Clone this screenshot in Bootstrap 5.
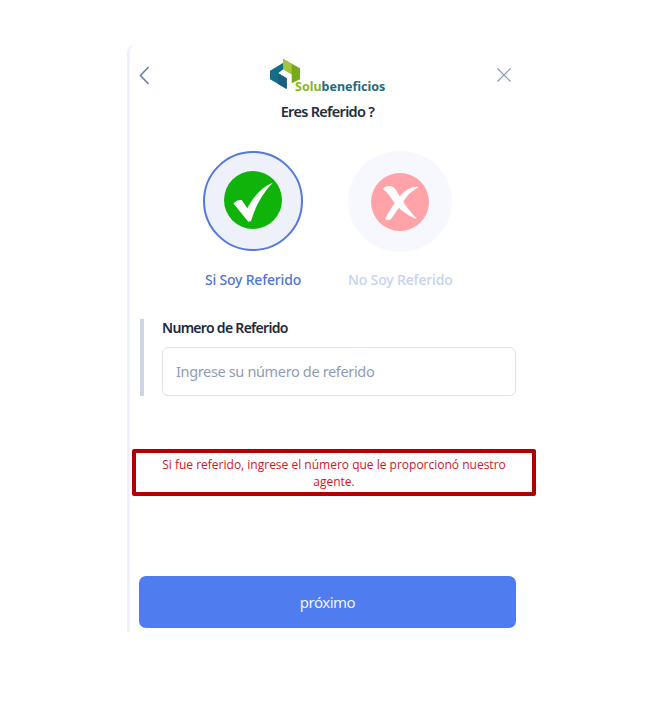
<!DOCTYPE html>
<html lang="es">

<head>
    <meta charset="UTF-8">
    <meta name="viewport" content="width=device-width, initial-scale=1">
    <title>Eres Referido</title>
    <link href="https://cdn.jsdelivr.net/npm/bootstrap@5.3.0/dist/css/bootstrap.min.css" rel="stylesheet">
    <style>
      body {
        background-color: #fff;
        font-family: "Noto Sans", "Open Sans", sans-serif;
      }
      .ref-panel {
        width: 392px;
        height: 587px;
        margin: 45px 0 0 127px;
        padding: 13px 0 0 9px;
        border-left: 3px solid #eef1fb;
        border-top-left-radius: 8px;
      }
      .ref-head {
        width: 377px;
        height: 36px;
      }
      .ref-back {
        margin: 8px 0 0 0;
      }
      .ref-logo {
        margin-left: 11px;
      }
      .ref-close {
        margin: 10px 5px 0 0;
      }
      .logo-text {
        font-family: "Noto Sans", sans-serif;
        font-size: 12.5px;
        font-weight: 700;
      }
      .ref-title {
        width: 377px;
        margin: 7px 0 0;
        font-size: 14.5px;
        font-weight: 600;
        line-height: 20px;
        color: #232b3e;
        text-align: center;
        letter-spacing: -0.7px;
      }
      .ref-options {
        margin: 30px 0 0 64px;
        gap: 45px;
      }
      .ref-option {
        width: 100px;
      }
      .ref-option.off {
        width: 104px;
      }
      .ref-circle {
        width: 100px;
        height: 100px;
        background-color: #eef1fa;
        border: 2px solid #5579dc;
      }
      .ref-circle svg {
        margin-bottom: 2px;
      }
      .ref-circle.off {
        width: 104px;
        height: 101px;
        background-color: #f7f8fd;
        border: 0;
      }
      .ref-circle.off svg {
        margin-bottom: 0;
      }
      .ref-option-label {
        margin-top: 19px;
        font-size: 14px;
        font-weight: 500;
        line-height: 20px;
        white-space: nowrap;
        color: #4f74d8;
        letter-spacing: -0.2px;
      }
      .ref-option-label.off {
        margin-top: 18px;
        color: #c5d2f3;
        letter-spacing: -0.15px;
      }
      .ref-field {
        width: 376px;
        height: 77px;
        margin: 29px 0 0 1px;
        padding-left: 18px;
        border-left: 4px solid #ccd4e6;
      }
      .ref-field .form-label {
        margin: 0 0 10px;
        font-size: 14px;
        font-weight: 600;
        line-height: 18px;
        color: #20283a;
        letter-spacing: -0.7px;
      }
      .ref-field .form-control {
        height: 49px;
        padding: 0 13px 2px;
        font-size: 14.5px;
        letter-spacing: -0.35px;
        border: 1px solid #dde1ea;
        border-radius: 6px;
      }
      .ref-field .form-control::placeholder {
        color: #8f9bb8;
        opacity: 1;
      }
      .ref-note {
        width: 404px;
        height: 47px;
        margin: 53px 0 0 -7px;
        padding: 3px 20px 0;
        font-family: "Open Sans", sans-serif;
        font-size: 12px;
        line-height: 17px;
        color: #d2161f;
        text-align: center;
        border: 4px solid #b00000;
        border-radius: 2px;
      }
      .ref-next {
        display: block;
        width: 377px;
        height: 52px;
        margin-top: 80px;
        font-size: 15px;
        letter-spacing: -0.5px;
        color: #eef3fd;
        background-color: #4f7cee;
        border: 0;
        border-radius: 7px;
      }
    </style>
</head>

<body>
    <div class="ref-panel">
        <div class="ref-head d-flex justify-content-between align-items-start">
            <svg class="ref-back" width="11" height="19" viewBox="0 0 11 19"><path d="M9.5 1 1.5 9.5 9.5 18" fill="none" stroke="#6c7da3" stroke-width="1.6"/></svg>
            <svg class="ref-logo" width="118" height="36" viewBox="0 0 118 36">
                <polygon points="0,12.7 13.3,4.7 13.3,11.3 8.3,15.3 16.7,20.3 16.7,31 0,21.3" fill="#136f86"/>
                <polygon points="8.3,15.3 16.7,20.3 16.7,31 8.3,26" fill="#1c5c80"/>
                <polygon points="13.3,1 30,10.3 30,21.3 21.7,25.3 21.7,16.3 13.3,11.3" fill="#76aa1c"/>
                <polygon points="13.3,1 21.7,5.7 21.7,16.3 13.3,11.3" fill="#a4c639"/>
                <text class="logo-text" x="25" y="33"><tspan fill="#8ab51f">Solu</tspan><tspan fill="#1d6a80">beneficios</tspan></text>
            </svg>
            <svg class="ref-close" width="14" height="14" viewBox="0 0 14 14"><path d="M.5.5 13.5 13.5M13.5.5.5 13.5" fill="none" stroke="#8a97bd" stroke-width="1.2"/></svg>
        </div>
        <p class="ref-title">Eres Referido ?</p>

        <div class="ref-options d-flex">
            <div class="ref-option text-center">
                <div class="ref-circle rounded-circle d-flex align-items-center justify-content-center">
                    <svg width="58" height="58" viewBox="0 0 58 58">
                        <circle cx="29" cy="29" r="29" fill="#0fb30a"/>
                        <path d="M9.3 32.3C12 29.5 15 28.5 17.7 29L23.3 37.3C29 26 38 16 48.7 11.7 38 23 31 36 27 50L24.3 50.7Z" fill="#fff"/>
                    </svg>
                </div>
                <div class="ref-option-label">Si Soy Referido</div>
            </div>
            <div class="ref-option off text-center">
                <div class="ref-circle off rounded-circle d-flex align-items-center justify-content-center">
                    <svg width="58" height="58" viewBox="0 0 58 58">
                        <circle cx="29" cy="29" r="29" fill="#ffa3a8"/>
                        <path d="M12 16C16 11 22 13 25 17 30 26 38 38 46 46 38 44 28 36 22 28 19 23 16 19 12 16Z" fill="#fff"/>
                        <path d="M48 14C42 13 36 16 30 22 24 29 18 38 14 46 16 48 19 47 20 46 26 38 33 27 37 22 40 19 44 16 48 14Z" fill="#fff"/>
                    </svg>
                </div>
                <div class="ref-option-label off">No Soy Referido</div>
            </div>
        </div>

        <div class="ref-field">
            <label class="form-label d-block" for="numeroReferido">Numero de Referido</label>
            <input type="text" id="numeroReferido" class="form-control" placeholder="Ingrese su número de referido">
        </div>

        <div class="ref-note">Si fue referido, ingrese el número que le proporcionó nuestro agente.</div>

        <button type="button" class="btn btn-primary ref-next">próximo</button>
    </div>
    <script src="https://cdn.jsdelivr.net/npm/bootstrap@5.3.0/dist/js/bootstrap.bundle.min.js"></script>
</body>

</html>
